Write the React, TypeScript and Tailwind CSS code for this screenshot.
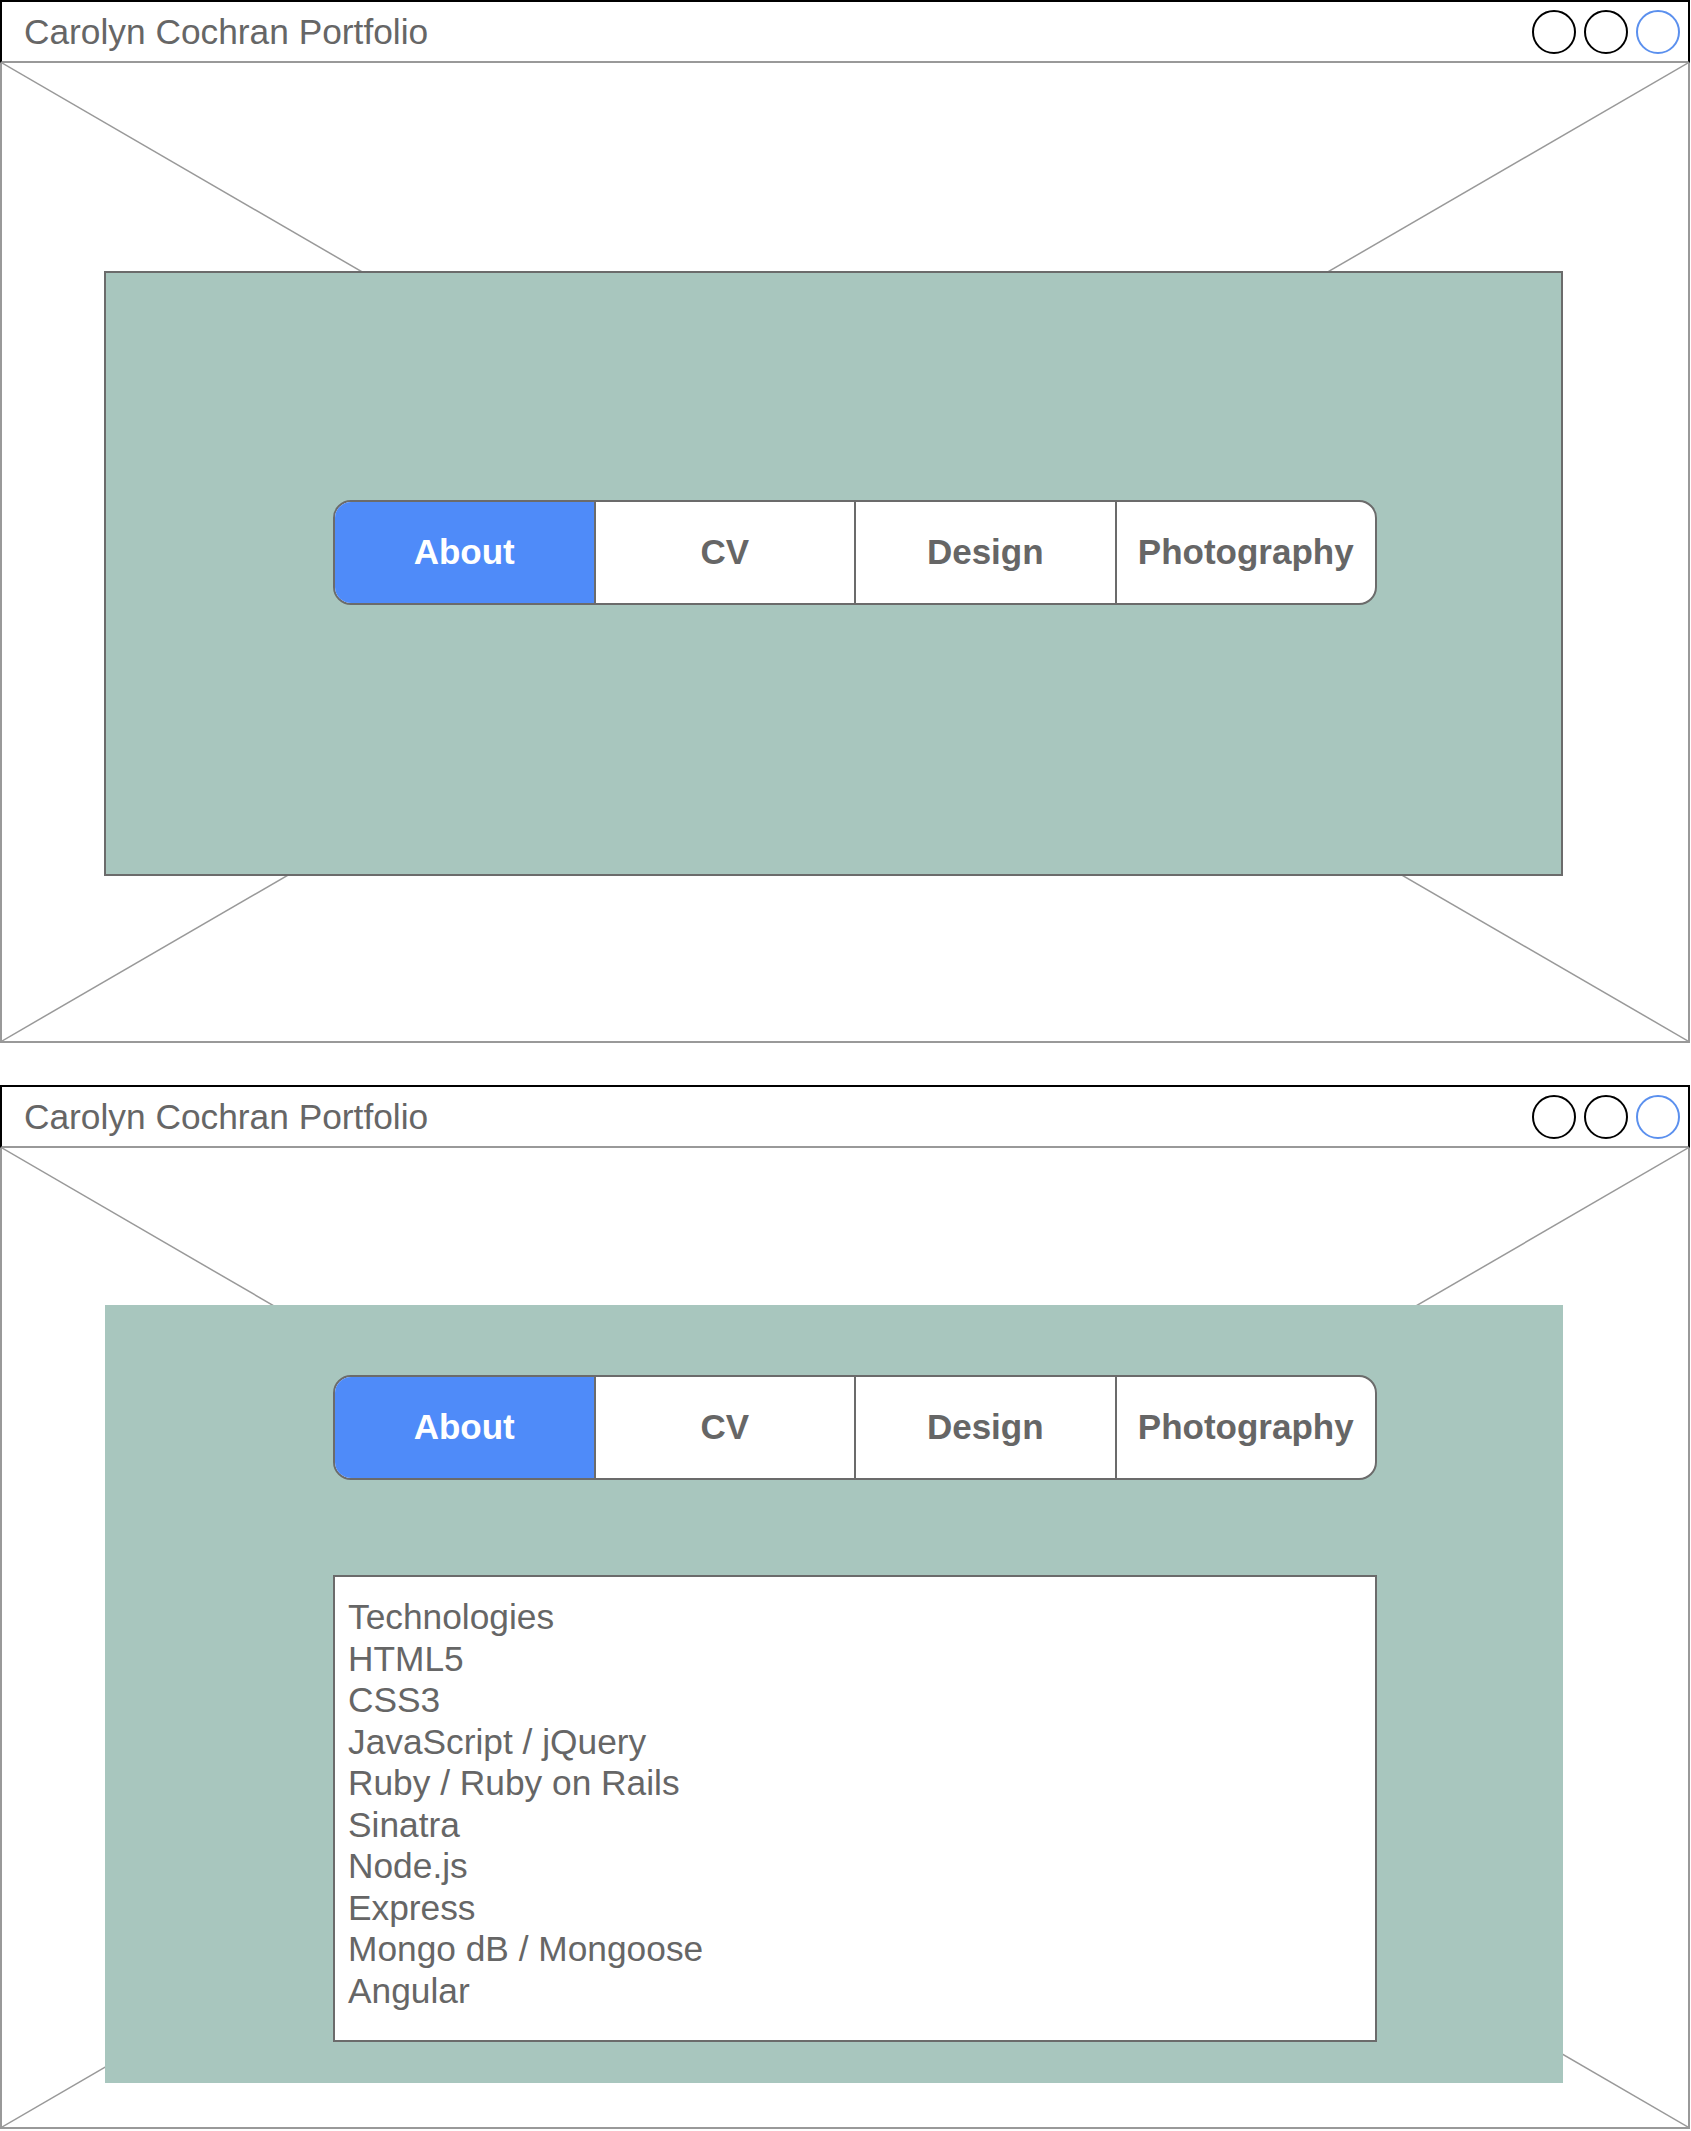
import React from "react";

const font = { fontFamily: '"Liberation Sans", Arial, Helvetica, sans-serif' };

function Header() {
  return (
    <div className="h-[63px] shrink-0 flex items-center justify-between border-t-2 border-l-2 border-r-2 border-b-2 border-t-black border-l-black border-r-black border-b-[#999999] pl-[22px] pr-[8px]">
      <span className="text-[35.3px] leading-none text-[#666666]">Carolyn Cochran Portfolio</span>
      <div className="flex items-center gap-[8px]">
        <div className="w-[44px] h-[44px] rounded-full border-2 border-black" />
        <div className="w-[44px] h-[44px] rounded-full border-2 border-black" />
        <div className="w-[44px] h-[44px] rounded-full border-2 border-[#5b90ee]" />
      </div>
    </div>
  );
}

function Cross() {
  return (
    <svg className="absolute inset-0 w-full h-full" preserveAspectRatio="none">
      <line x1="0" y1="0" x2="100%" y2="100%" stroke="#999999" strokeWidth="1.5" />
      <line x1="100%" y1="0" x2="0" y2="100%" stroke="#999999" strokeWidth="1.5" />
    </svg>
  );
}

function Nav() {
  const tabs = ["About", "CV", "Design", "Photography"];
  return (
    <div className="w-[1044px] h-[105px] flex rounded-[18px] border-2 border-[#6b6b6b] bg-white overflow-hidden">
      {tabs.map((t, i) => (
        <div
          key={t}
          className={
            i === 0
              ? "flex-1 flex items-center justify-center bg-[#4f8bf9] text-white font-bold text-[35px]"
              : "flex-1 flex items-center justify-center border-l-2 border-[#6b6b6b] text-[#666666] font-bold text-[35px]"
          }
        >
          {t}
        </div>
      ))}
    </div>
  );
}

const techs = [
  "Technologies",
  "HTML5",
  "CSS3",
  "JavaScript / jQuery",
  "Ruby / Ruby on Rails",
  "Sinatra",
  "Node.js",
  "Express",
  "Mongo dB / Mongoose",
  "Angular",
];

export default function App() {
  return (
    <div className="w-[1691px] bg-white" style={font}>
      {/* Window 1 */}
      <div className="w-[1690px] h-[1043px] flex flex-col">
        <Header />
        <div className="relative flex-1 border-l-2 border-r-2 border-b-2 border-[#999999] pt-[208px] pl-[102px]">
          <Cross />
          <div className="relative w-[1459px] h-[605px] bg-[#a8c6be] border-2 border-[#6b6b6b] pt-[227px] pl-[227px]">
            <Nav />
          </div>
        </div>
      </div>

      <div className="h-[42px]" />

      {/* Window 2 */}
      <div className="w-[1690px] h-[1044px] flex flex-col">
        <Header />
        <div className="relative flex-1 border-l-2 border-r-2 border-b-2 border-[#999999] pt-[157px] pl-[103px]">
          <Cross />
          <div className="relative w-[1458px] h-[778px] bg-[#a8c6be] pt-[70px] pl-[228px]">
            <Nav />
            <div className="mt-[95px] w-[1044px] h-[467px] bg-white border-2 border-[#6b6b6b] pt-[19px] pl-[13px]">
              {techs.map((t) => (
                <div key={t} className="text-[35.3px] leading-[41.5px] text-[#666666]">
                  {t}
                </div>
              ))}
            </div>
          </div>
        </div>
      </div>
    </div>
  );
}
